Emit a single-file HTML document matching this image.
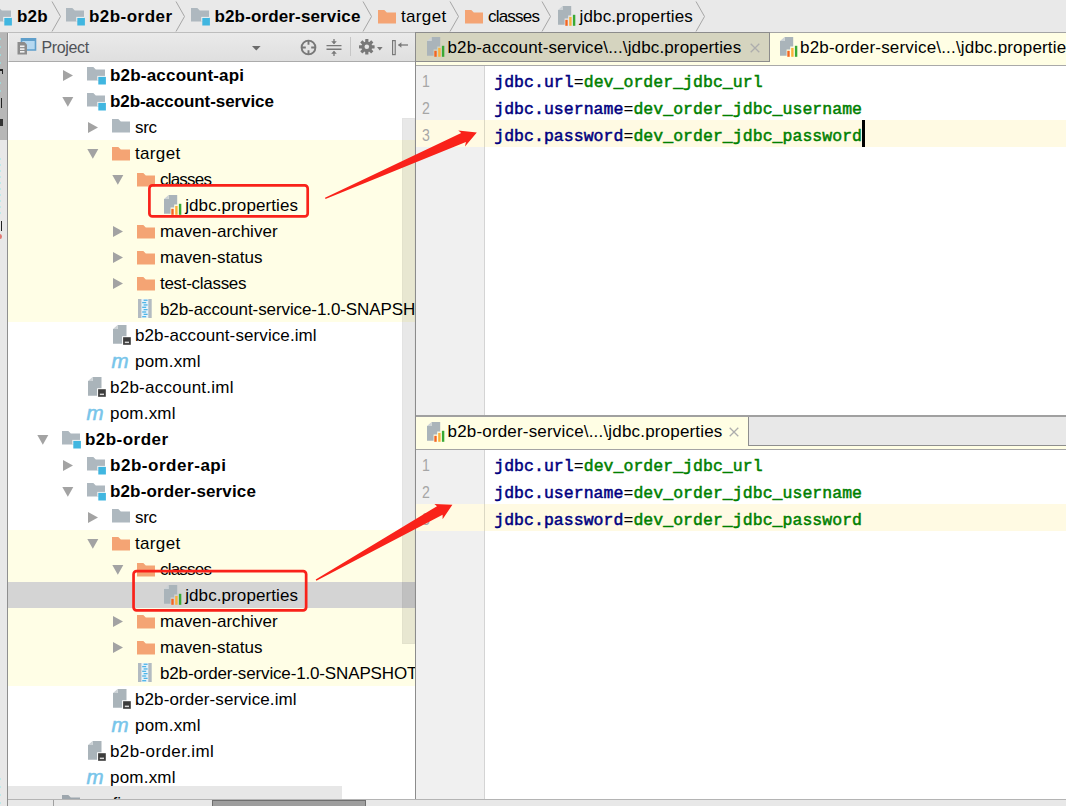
<!DOCTYPE html>
<html><head><meta charset="utf-8"><title>b2b - jdbc.properties</title>
<style>
*{box-sizing:border-box;margin:0;padding:0}
html,body{width:1066px;height:806px;overflow:hidden;background:#fff}
body{position:relative;font:17px "Liberation Sans", sans-serif;color:#000}
.abs{position:absolute}
#crumb{position:absolute;left:0;top:0;width:1066px;height:33px;background:#e9e9e9;border-bottom:1px solid #bdbdbd;overflow:hidden}
.ic{position:absolute;line-height:0}
.tx{position:absolute;white-space:nowrap;line-height:26px;top:0;font-size:17px}
.b{font-weight:bold}
#strip{position:absolute;left:0;top:33px;width:8px;height:773px;background:#e8e8e8;border-right:1px solid #8f8f8f;overflow:hidden}
#tree{position:absolute;left:8px;top:62px;width:407px;height:737px;overflow:hidden;background:#fff}
#treein{position:absolute;left:-8px;top:-62px;width:440px;height:880px}
.row{position:absolute;left:0;width:520px;height:26px}
.ar{position:absolute;line-height:0}
.yb{position:absolute;left:8px;width:407px;background:#fffee6}
#phead{position:absolute;left:8px;top:33px;width:407px;height:29px;background:linear-gradient(#eaeaea,#dfdfdf);border-bottom:1px solid #ababab;border-left:1px solid #f6f6f6}
.cl{position:absolute;left:494.2px;white-space:pre;font:16.5px/27px "Liberation Mono", monospace;letter-spacing:0.04px;height:27px;-webkit-text-stroke:0.5px currentColor}
.k{color:#000080}.v{color:#008000}.eq{color:#000;-webkit-text-stroke:0}
.ln{position:absolute;left:422px;font:16px/27px "Liberation Sans", sans-serif;color:#a6a6a6;transform:scaleX(0.88);transform-origin:0 0}
.mi{display:block;font:italic 20.5px/26px "Liberation Sans", sans-serif;color:#78c5ea;-webkit-text-stroke:0.55px #78c5ea}
.tab{position:absolute;white-space:nowrap;overflow:hidden}
</style></head><body>
<div id="crumb"><span class="ic" style="left:-7px;top:8.4px"><svg width="20" height="19" viewBox="0 0 20 19" style=""><path d="M0 0h6.3l2.5 2.5h9.2v11h-18z" fill="#aeb8bf"/><rect x="10.3" y="8.9" width="7.7" height="4.6" fill="#f4f4f4"/><rect x="11.3" y="9.9" width="7.6" height="7.6" fill="#40b6e0"/></svg></span><span class="tx b" style="left:17px;top:3.5px;letter-spacing:0.167px;">b2b</span><span class="ic" style="left:66px;top:8.4px"><svg width="20" height="19" viewBox="0 0 20 19" style=""><path d="M0 0h6.3l2.5 2.5h9.2v11h-18z" fill="#aeb8bf"/><rect x="10.3" y="8.9" width="7.7" height="4.6" fill="#f4f4f4"/><rect x="11.3" y="9.9" width="7.6" height="7.6" fill="#40b6e0"/></svg></span><span class="tx b" style="left:89px;top:3.5px;letter-spacing:0.467px;">b2b-order</span><span class="ic" style="left:191px;top:8.4px"><svg width="20" height="19" viewBox="0 0 20 19" style=""><path d="M0 0h6.3l2.5 2.5h9.2v11h-18z" fill="#aeb8bf"/><rect x="10.3" y="8.9" width="7.7" height="4.6" fill="#f4f4f4"/><rect x="11.3" y="9.9" width="7.6" height="7.6" fill="#40b6e0"/></svg></span><span class="tx b" style="left:214.5px;top:3.5px;letter-spacing:0.141px;">b2b-order-service</span><span class="ic" style="left:377.7px;top:10.3px"><svg width="20" height="16" viewBox="0 0 20 16" style=""><path d="M0 0h6.3l2.5 2.5h9.2v11h-18z" fill="#f4a474"/></svg></span><span class="tx" style="left:401px;top:3.5px;letter-spacing:0.333px;">target</span><span class="ic" style="left:464.8px;top:10.3px"><svg width="20" height="16" viewBox="0 0 20 16" style=""><path d="M0 0h6.3l2.5 2.5h9.2v11h-18z" fill="#f4a474"/></svg></span><span class="tx" style="left:488px;top:3.5px;letter-spacing:-0.786px;">classes</span><span class="ic" style="left:558.4px;top:6px"><svg width="20" height="21" viewBox="0 0 20 21" style=""><path d="M4.6 0h8.6v9.5h-3v3h-3.6v6.2h-6.6v-14.6h4.6z" fill="#aab4ba"/><path d="M0 4.1l4.6-4.1v4.1z" fill="#ccd2d6"/><rect x="7.3" y="13.8" width="2.4" height="6" fill="#f26522"/><rect x="11.2" y="10.9" width="2.4" height="8.9" fill="#fbb03b"/><rect x="14.9" y="8.8" width="2.4" height="11" fill="#39a935"/></svg></span><span class="tx" style="left:579.6px;top:3.5px;letter-spacing:0.12px;">jdbc.properties</span><span class="ic" style="left:50.6px;top:1px"><svg width="11" height="31" viewBox="0 0 11 31" style=""><path d="M1 0.5L9.5 15.5L1 30.5" fill="none" stroke="#a6a6a6" stroke-width="1"/></svg></span><span class="ic" style="left:175.4px;top:1px"><svg width="11" height="31" viewBox="0 0 11 31" style=""><path d="M1 0.5L9.5 15.5L1 30.5" fill="none" stroke="#a6a6a6" stroke-width="1"/></svg></span><span class="ic" style="left:362px;top:1px"><svg width="11" height="31" viewBox="0 0 11 31" style=""><path d="M1 0.5L9.5 15.5L1 30.5" fill="none" stroke="#a6a6a6" stroke-width="1"/></svg></span><span class="ic" style="left:448.5px;top:1px"><svg width="11" height="31" viewBox="0 0 11 31" style=""><path d="M1 0.5L9.5 15.5L1 30.5" fill="none" stroke="#a6a6a6" stroke-width="1"/></svg></span><span class="ic" style="left:540.5px;top:1px"><svg width="11" height="31" viewBox="0 0 11 31" style=""><path d="M1 0.5L9.5 15.5L1 30.5" fill="none" stroke="#a6a6a6" stroke-width="1"/></svg></span><span class="ic" style="left:695.3px;top:1px"><svg width="11" height="31" viewBox="0 0 11 31" style=""><path d="M1 0.5L9.5 15.5L1 30.5" fill="none" stroke="#a6a6a6" stroke-width="1"/></svg></span></div>
<div id="strip"><div class="abs" style="left:0;top:0;width:7px;height:107px;background:#b7b7b7"></div></div>
<div class="abs" style="left:0px;top:69px;width:3px;height:1.5px;background:#222"></div><div class="abs" style="left:2px;top:70px;width:1px;height:4px;background:#222"></div><div class="abs" style="left:1.2px;top:98px;width:1.2px;height:10px;background:#222"></div><div class="abs" style="left:0px;top:119px;width:2.5px;height:7px;background:#333"></div><div class="abs" style="left:0px;top:38px;width:1px;height:2px;background:#9fd6d6"></div><div class="abs" style="left:0px;top:46px;width:1px;height:2px;background:#9fd6d6"></div><div class="abs" style="left:0px;top:54px;width:1px;height:2px;background:#9fd6d6"></div><div class="abs" style="left:0px;top:62px;width:1px;height:2px;background:#9fd6d6"></div><div class="abs" style="left:0px;top:82px;width:1px;height:2px;background:#9fd6d6"></div><div class="abs" style="left:0px;top:90px;width:1px;height:2px;background:#9fd6d6"></div><div class="abs" style="left:0px;top:158px;width:1px;height:2px;background:#bdeaea"></div><div class="abs" style="left:0px;top:164px;width:1px;height:2px;background:#bdeaea"></div><div class="abs" style="left:0px;top:170px;width:1px;height:2px;background:#bdeaea"></div><div class="abs" style="left:0px;top:176px;width:1px;height:2px;background:#bdeaea"></div><div class="abs" style="left:0px;top:182px;width:1px;height:2px;background:#bdeaea"></div><div class="abs" style="left:0px;top:188px;width:1px;height:2px;background:#bdeaea"></div><div class="abs" style="left:0px;top:194px;width:1px;height:2px;background:#bdeaea"></div><div class="abs" style="left:0px;top:200px;width:1px;height:2px;background:#bdeaea"></div><div class="abs" style="left:0px;top:206px;width:1px;height:2px;background:#bdeaea"></div><div class="abs" style="left:0px;top:212px;width:1px;height:2px;background:#bdeaea"></div><div class="abs" style="left:1.2px;top:221px;width:1.2px;height:10px;background:#222"></div><div class="abs" style="left:-2px;top:234px;width:4px;height:5px;border-radius:50%;background:#e27a74"></div><div class="abs" style="left:0px;top:778px;width:1px;height:2px;background:#bdeaea"></div><div class="abs" style="left:0px;top:786px;width:1px;height:2px;background:#bdeaea"></div><div class="abs" style="left:0px;top:794px;width:1px;height:2px;background:#bdeaea"></div><div class="abs" style="left:0px;top:802px;width:1px;height:2px;background:#bdeaea"></div>
<div id="phead"></div>
<span class="ic" style="left:17px;top:38px"><svg width="20" height="18" viewBox="0 0 20 18" style=""><rect x="4.5" y="0.5" width="14" height="11.5" fill="#b5d8f0"/><path d="M4.5 0.5h14v11.5h-14z" fill="none" stroke="#5f9fcb" stroke-width="1.6"/><rect x="4" y="0" width="15" height="3" fill="#5f9fcb"/><path d="M0.5 4h7l2.5 2.5v10h-9.5z" fill="#8c8c8c"/><rect x="3" y="7.5" width="4.5" height="1.6" fill="#f2f2f2"/><rect x="3" y="10.3" width="4.5" height="1.6" fill="#f2f2f2"/><rect x="3" y="13" width="4.5" height="1.6" fill="#f2f2f2"/></svg></span><span class="tx" style="left:41.5px;top:34.5px;color:#4f5257;font-size:16px;letter-spacing:-0.35px">Project</span><span class="ic" style="left:252px;top:46px"><svg width="9" height="5" viewBox="0 0 9 5" style=""><path d="M0 0H8.6L4.3 4.6z" fill="#6b6b6b"/></svg></span><span class="ic" style="left:300px;top:38.5px"><svg width="17" height="17" viewBox="0 0 17 17" style=""><circle cx="8.5" cy="8.5" r="6.9" fill="none" stroke="#787878" stroke-width="1.9"/><path d="M8.5 1.5v4.3M8.5 15.5v-4.3M1.5 8.5h4.3M15.5 8.5h-4.3" stroke="#787878" stroke-width="1.9" fill="none"/></svg></span><span class="ic" style="left:326px;top:38.5px"><svg width="16" height="17" viewBox="0 0 16 17" style=""><path d="M0.5 6.6h15M0.5 10.2h15" stroke="#787878" stroke-width="1.4" fill="none"/><path d="M8 0v4.5M8 17v-4.5" stroke="#787878" stroke-width="1.3" fill="none"/><path d="M5.2 2.3h5.6L8 5.3zM5.2 14.7h5.6L8 11.7z" fill="#787878"/></svg></span><div class="abs" style="left:350px;top:37px;width:1px;height:19px;background:#c6c6c6"></div><span class="ic" style="left:359px;top:39px"><svg width="16" height="16" viewBox="0 0 16 16" style=""><rect x="6.2" y="0" width="3.2" height="15.6" rx="0.4" fill="#787878" transform="rotate(0 7.8 7.8)"/><rect x="6.2" y="0" width="3.2" height="15.6" rx="0.4" fill="#787878" transform="rotate(45 7.8 7.8)"/><rect x="6.2" y="0" width="3.2" height="15.6" rx="0.4" fill="#787878" transform="rotate(90 7.8 7.8)"/><rect x="6.2" y="0" width="3.2" height="15.6" rx="0.4" fill="#787878" transform="rotate(135 7.8 7.8)"/><circle cx="7.8" cy="7.8" r="5.4" fill="#787878"/><circle cx="7.8" cy="7.8" r="2.3" fill="#e6e6e6"/></svg></span><span class="ic" style="left:377px;top:45.5px"><svg width="6" height="4" viewBox="0 0 6 4" style=""><path d="M0 0H5.6L2.8 3.4z" fill="#787878"/></svg></span><span class="ic" style="left:392px;top:39.5px"><svg width="17" height="16" viewBox="0 0 17 16" style=""><rect x="0.6" y="0.6" width="2.6" height="14" fill="#e9e9e9" stroke="#787878" stroke-width="1.2"/><path d="M6.5 5h9.5" stroke="#787878" stroke-width="1.3"/><path d="M6 5l3.4-2.8v5.6z" fill="#787878"/></svg></span>
<div id="tree"><div id="treein">
<div class="yb" style="top:140px;height:182px"></div>
<div class="yb" style="top:530px;height:156px"></div>
<div class="abs" style="left:8px;top:582px;width:407px;height:26px;background:#d4d4d4"></div>
<div class="row" style="top:62px"><span class="ar" style="left:63px;top:8px"><svg width="10" height="11" viewBox="0 0 10 11" style=""><path d="M0 0L10 5.5L0 11z" fill="#a3a3a3"/></svg></span><span class="ic" style="left:87px;top:5.4px"><svg width="20" height="19" viewBox="0 0 20 19" style=""><path d="M0 0h6.3l2.5 2.5h9.2v11h-18z" fill="#aeb8bf"/><rect x="10.3" y="8.9" width="7.7" height="4.6" fill="#f4f4f4"/><rect x="11.3" y="9.9" width="7.6" height="7.6" fill="#40b6e0"/></svg></span><span class="tx b" style="left:110px;top:1px;letter-spacing:0.2px;">b2b-account-api</span></div>
<div class="row" style="top:88px"><span class="ar" style="left:62px;top:9px"><svg width="12" height="10" viewBox="0 0 12 10" style=""><path d="M0.3 0H11.3L5.8 9.8z" fill="#a3a3a3"/></svg></span><span class="ic" style="left:87px;top:5.4px"><svg width="20" height="19" viewBox="0 0 20 19" style=""><path d="M0 0h6.3l2.5 2.5h9.2v11h-18z" fill="#aeb8bf"/><rect x="10.3" y="8.9" width="7.7" height="4.6" fill="#f4f4f4"/><rect x="11.3" y="9.9" width="7.6" height="7.6" fill="#40b6e0"/></svg></span><span class="tx b" style="left:110px;top:1px;letter-spacing:-0.079px;">b2b-account-service</span></div>
<div class="row" style="top:114px"><span class="ar" style="left:88px;top:8px"><svg width="10" height="11" viewBox="0 0 10 11" style=""><path d="M0 0L10 5.5L0 11z" fill="#a3a3a3"/></svg></span><span class="ic" style="left:112px;top:5.4px"><svg width="20" height="16" viewBox="0 0 20 16" style=""><path d="M0 0h6.3l2.5 2.5h9.2v11h-18z" fill="#aeb8bf"/></svg></span><span class="tx" style="left:135px;top:1px;letter-spacing:-0.333px;">src</span></div>
<div class="row" style="top:140px"><span class="ar" style="left:87px;top:9px"><svg width="12" height="10" viewBox="0 0 12 10" style=""><path d="M0.3 0H11.3L5.8 9.8z" fill="#a3a3a3"/></svg></span><span class="ic" style="left:112px;top:7.3px"><svg width="20" height="16" viewBox="0 0 20 16" style=""><path d="M0 0h6.3l2.5 2.5h9.2v11h-18z" fill="#f4a474"/></svg></span><span class="tx" style="left:135px;top:1px;letter-spacing:0.333px;">target</span></div>
<div class="row" style="top:166px"><span class="ar" style="left:112px;top:9px"><svg width="12" height="10" viewBox="0 0 12 10" style=""><path d="M0.3 0H11.3L5.8 9.8z" fill="#a3a3a3"/></svg></span><span class="ic" style="left:137px;top:7.3px"><svg width="20" height="16" viewBox="0 0 20 16" style=""><path d="M0 0h6.3l2.5 2.5h9.2v11h-18z" fill="#f4a474"/></svg></span><span class="tx" style="left:160px;top:1px;letter-spacing:-0.786px;">classes</span></div>
<div class="row" style="top:192px"><span class="ic" style="left:163.7px;top:3px"><svg width="20" height="21" viewBox="0 0 20 21" style=""><path d="M4.6 0h8.6v9.5h-3v3h-3.6v6.2h-6.6v-14.6h4.6z" fill="#aab4ba"/><path d="M0 4.1l4.6-4.1v4.1z" fill="#ccd2d6"/><rect x="7.3" y="13.8" width="2.4" height="6" fill="#f26522"/><rect x="11.2" y="10.9" width="2.4" height="8.9" fill="#fbb03b"/><rect x="14.9" y="8.8" width="2.4" height="11" fill="#39a935"/></svg></span><span class="tx" style="left:185.2px;top:1px;letter-spacing:0.09px;">jdbc.properties</span></div>
<div class="row" style="top:218px"><span class="ar" style="left:113px;top:8px"><svg width="10" height="11" viewBox="0 0 10 11" style=""><path d="M0 0L10 5.5L0 11z" fill="#a3a3a3"/></svg></span><span class="ic" style="left:137px;top:7.3px"><svg width="20" height="16" viewBox="0 0 20 16" style=""><path d="M0 0h6.3l2.5 2.5h9.2v11h-18z" fill="#f4a474"/></svg></span><span class="tx" style="left:160px;top:1px;letter-spacing:0.036px;">maven-archiver</span></div>
<div class="row" style="top:244px"><span class="ar" style="left:113px;top:8px"><svg width="10" height="11" viewBox="0 0 10 11" style=""><path d="M0 0L10 5.5L0 11z" fill="#a3a3a3"/></svg></span><span class="ic" style="left:137px;top:7.3px"><svg width="20" height="16" viewBox="0 0 20 16" style=""><path d="M0 0h6.3l2.5 2.5h9.2v11h-18z" fill="#f4a474"/></svg></span><span class="tx" style="left:160px;top:1px;letter-spacing:0.042px;">maven-status</span></div>
<div class="row" style="top:270px"><span class="ar" style="left:113px;top:8px"><svg width="10" height="11" viewBox="0 0 10 11" style=""><path d="M0 0L10 5.5L0 11z" fill="#a3a3a3"/></svg></span><span class="ic" style="left:137px;top:7.3px"><svg width="20" height="16" viewBox="0 0 20 16" style=""><path d="M0 0h6.3l2.5 2.5h9.2v11h-18z" fill="#f4a474"/></svg></span><span class="tx" style="left:160px;top:1px;letter-spacing:-0.292px;">test-classes</span></div>
<div class="row" style="top:296px"><span class="ic" style="left:138.3px;top:3px"><svg width="18" height="20" viewBox="0 0 18 20" style=""><rect x="0" y="0" width="13.7" height="19" fill="#b3bbc1"/><rect x="3.4" y="0" width="6.9" height="19" fill="#e9f4fa"/><rect x="5.6" y="0.60" width="4" height="1.3" fill="#4db4e6"/><rect x="4.2" y="2.95" width="4" height="1.3" fill="#4db4e6"/><rect x="5.6" y="5.30" width="4" height="1.3" fill="#4db4e6"/><rect x="4.2" y="7.65" width="4" height="1.3" fill="#4db4e6"/><rect x="5.6" y="10.00" width="4" height="1.3" fill="#4db4e6"/><rect x="4.2" y="12.35" width="4" height="1.3" fill="#4db4e6"/><rect x="5.6" y="14.70" width="4" height="1.3" fill="#4db4e6"/><rect x="4.2" y="17.05" width="4" height="1.3" fill="#4db4e6"/></svg></span><span class="tx" style="left:160px;top:1px;letter-spacing:-0.09px;">b2b-account-service-1.0-SNAPSHOT.jar</span></div>
<div class="row" style="top:322px"><span class="ic" style="left:113.4px;top:3.2px"><svg width="20" height="21" viewBox="0 0 20 21" style=""><path d="M4.6 0h8.9v11.2h-4.4v7.6h-9.1v-14.7h4.6z" fill="#aab4ba"/><path d="M0 4.1l4.6-4.1v4.1z" fill="#ccd2d6"/><rect x="10.1" y="12.2" width="7.7" height="7.6" fill="#3c3c3c"/><rect x="11.8" y="16.6" width="4.2" height="1.5" fill="#d8d8d8"/></svg></span><span class="tx" style="left:135px;top:1px;letter-spacing:0.096px;">b2b-account-service.iml</span></div>
<div class="row" style="top:348px"><span class="ic" style="left:111.5px;top:-0.3px"><span class="mi">m</span></span><span class="tx" style="left:135px;top:1px;letter-spacing:0.214px;">pom.xml</span></div>
<div class="row" style="top:374px"><span class="ic" style="left:88.4px;top:3.2px"><svg width="20" height="21" viewBox="0 0 20 21" style=""><path d="M4.6 0h8.9v11.2h-4.4v7.6h-9.1v-14.7h4.6z" fill="#aab4ba"/><path d="M0 4.1l4.6-4.1v4.1z" fill="#ccd2d6"/><rect x="10.1" y="12.2" width="7.7" height="7.6" fill="#3c3c3c"/><rect x="11.8" y="16.6" width="4.2" height="1.5" fill="#d8d8d8"/></svg></span><span class="tx" style="left:110px;top:1px;letter-spacing:0.253px;">b2b-account.iml</span></div>
<div class="row" style="top:400px"><span class="ic" style="left:86.5px;top:-0.3px"><span class="mi">m</span></span><span class="tx" style="left:110px;top:1px;letter-spacing:0.214px;">pom.xml</span></div>
<div class="row" style="top:426px"><span class="ar" style="left:37px;top:9px"><svg width="12" height="10" viewBox="0 0 12 10" style=""><path d="M0.3 0H11.3L5.8 9.8z" fill="#a3a3a3"/></svg></span><span class="ic" style="left:62px;top:5.4px"><svg width="20" height="19" viewBox="0 0 20 19" style=""><path d="M0 0h6.3l2.5 2.5h9.2v11h-18z" fill="#aeb8bf"/><rect x="10.3" y="8.9" width="7.7" height="4.6" fill="#f4f4f4"/><rect x="11.3" y="9.9" width="7.6" height="7.6" fill="#40b6e0"/></svg></span><span class="tx b" style="left:85px;top:1px;letter-spacing:0.467px;">b2b-order</span></div>
<div class="row" style="top:452px"><span class="ar" style="left:63px;top:8px"><svg width="10" height="11" viewBox="0 0 10 11" style=""><path d="M0 0L10 5.5L0 11z" fill="#a3a3a3"/></svg></span><span class="ic" style="left:87px;top:5.4px"><svg width="20" height="19" viewBox="0 0 20 19" style=""><path d="M0 0h6.3l2.5 2.5h9.2v11h-18z" fill="#aeb8bf"/><rect x="10.3" y="8.9" width="7.7" height="4.6" fill="#f4f4f4"/><rect x="11.3" y="9.9" width="7.6" height="7.6" fill="#40b6e0"/></svg></span><span class="tx b" style="left:110px;top:1px;letter-spacing:0.538px;">b2b-order-api</span></div>
<div class="row" style="top:478px"><span class="ar" style="left:62px;top:9px"><svg width="12" height="10" viewBox="0 0 12 10" style=""><path d="M0.3 0H11.3L5.8 9.8z" fill="#a3a3a3"/></svg></span><span class="ic" style="left:87px;top:5.4px"><svg width="20" height="19" viewBox="0 0 20 19" style=""><path d="M0 0h6.3l2.5 2.5h9.2v11h-18z" fill="#aeb8bf"/><rect x="10.3" y="8.9" width="7.7" height="4.6" fill="#f4f4f4"/><rect x="11.3" y="9.9" width="7.6" height="7.6" fill="#40b6e0"/></svg></span><span class="tx b" style="left:110px;top:1px;letter-spacing:0.141px;">b2b-order-service</span></div>
<div class="row" style="top:504px"><span class="ar" style="left:88px;top:8px"><svg width="10" height="11" viewBox="0 0 10 11" style=""><path d="M0 0L10 5.5L0 11z" fill="#a3a3a3"/></svg></span><span class="ic" style="left:112px;top:5.4px"><svg width="20" height="16" viewBox="0 0 20 16" style=""><path d="M0 0h6.3l2.5 2.5h9.2v11h-18z" fill="#aeb8bf"/></svg></span><span class="tx" style="left:135px;top:1px;letter-spacing:-0.333px;">src</span></div>
<div class="row" style="top:530px"><span class="ar" style="left:87px;top:9px"><svg width="12" height="10" viewBox="0 0 12 10" style=""><path d="M0.3 0H11.3L5.8 9.8z" fill="#a3a3a3"/></svg></span><span class="ic" style="left:112px;top:7.3px"><svg width="20" height="16" viewBox="0 0 20 16" style=""><path d="M0 0h6.3l2.5 2.5h9.2v11h-18z" fill="#f4a474"/></svg></span><span class="tx" style="left:135px;top:1px;letter-spacing:0.333px;">target</span></div>
<div class="row" style="top:556px"><span class="ar" style="left:112px;top:9px"><svg width="12" height="10" viewBox="0 0 12 10" style=""><path d="M0.3 0H11.3L5.8 9.8z" fill="#a3a3a3"/></svg></span><span class="ic" style="left:137px;top:7.3px"><svg width="20" height="16" viewBox="0 0 20 16" style=""><path d="M0 0h6.3l2.5 2.5h9.2v11h-18z" fill="#f4a474"/></svg></span><span class="tx" style="left:160px;top:1px;letter-spacing:-0.786px;">classes</span></div>
<div class="row" style="top:582px"><span class="ic" style="left:163.7px;top:3px"><svg width="20" height="21" viewBox="0 0 20 21" style=""><path d="M4.6 0h8.6v9.5h-3v3h-3.6v6.2h-6.6v-14.6h4.6z" fill="#aab4ba"/><path d="M0 4.1l4.6-4.1v4.1z" fill="#ccd2d6"/><rect x="7.3" y="13.8" width="2.4" height="6" fill="#f26522"/><rect x="11.2" y="10.9" width="2.4" height="8.9" fill="#fbb03b"/><rect x="14.9" y="8.8" width="2.4" height="11" fill="#39a935"/></svg></span><span class="tx" style="left:185.2px;top:1px;letter-spacing:0.09px;">jdbc.properties</span></div>
<div class="row" style="top:608px"><span class="ar" style="left:113px;top:8px"><svg width="10" height="11" viewBox="0 0 10 11" style=""><path d="M0 0L10 5.5L0 11z" fill="#a3a3a3"/></svg></span><span class="ic" style="left:137px;top:7.3px"><svg width="20" height="16" viewBox="0 0 20 16" style=""><path d="M0 0h6.3l2.5 2.5h9.2v11h-18z" fill="#f4a474"/></svg></span><span class="tx" style="left:160px;top:1px;letter-spacing:0.036px;">maven-archiver</span></div>
<div class="row" style="top:634px"><span class="ar" style="left:113px;top:8px"><svg width="10" height="11" viewBox="0 0 10 11" style=""><path d="M0 0L10 5.5L0 11z" fill="#a3a3a3"/></svg></span><span class="ic" style="left:137px;top:7.3px"><svg width="20" height="16" viewBox="0 0 20 16" style=""><path d="M0 0h6.3l2.5 2.5h9.2v11h-18z" fill="#f4a474"/></svg></span><span class="tx" style="left:160px;top:1px;letter-spacing:0.042px;">maven-status</span></div>
<div class="row" style="top:660px"><span class="ic" style="left:138.3px;top:3px"><svg width="18" height="20" viewBox="0 0 18 20" style=""><rect x="0" y="0" width="13.7" height="19" fill="#b3bbc1"/><rect x="3.4" y="0" width="6.9" height="19" fill="#e9f4fa"/><rect x="5.6" y="0.60" width="4" height="1.3" fill="#4db4e6"/><rect x="4.2" y="2.95" width="4" height="1.3" fill="#4db4e6"/><rect x="5.6" y="5.30" width="4" height="1.3" fill="#4db4e6"/><rect x="4.2" y="7.65" width="4" height="1.3" fill="#4db4e6"/><rect x="5.6" y="10.00" width="4" height="1.3" fill="#4db4e6"/><rect x="4.2" y="12.35" width="4" height="1.3" fill="#4db4e6"/><rect x="5.6" y="14.70" width="4" height="1.3" fill="#4db4e6"/><rect x="4.2" y="17.05" width="4" height="1.3" fill="#4db4e6"/></svg></span><span class="tx" style="left:160px;top:1px;letter-spacing:-0.15px;">b2b-order-service-1.0-SNAPSHOT.jar</span></div>
<div class="row" style="top:686px"><span class="ic" style="left:113.4px;top:3.2px"><svg width="20" height="21" viewBox="0 0 20 21" style=""><path d="M4.6 0h8.9v11.2h-4.4v7.6h-9.1v-14.7h4.6z" fill="#aab4ba"/><path d="M0 4.1l4.6-4.1v4.1z" fill="#ccd2d6"/><rect x="10.1" y="12.2" width="7.7" height="7.6" fill="#3c3c3c"/><rect x="11.8" y="16.6" width="4.2" height="1.5" fill="#d8d8d8"/></svg></span><span class="tx" style="left:135px;top:1px;letter-spacing:0.095px;">b2b-order-service.iml</span></div>
<div class="row" style="top:712px"><span class="ic" style="left:111.5px;top:-0.3px"><span class="mi">m</span></span><span class="tx" style="left:135px;top:1px;letter-spacing:0.214px;">pom.xml</span></div>
<div class="row" style="top:738px"><span class="ic" style="left:88.4px;top:3.2px"><svg width="20" height="21" viewBox="0 0 20 21" style=""><path d="M4.6 0h8.9v11.2h-4.4v7.6h-9.1v-14.7h4.6z" fill="#aab4ba"/><path d="M0 4.1l4.6-4.1v4.1z" fill="#ccd2d6"/><rect x="10.1" y="12.2" width="7.7" height="7.6" fill="#3c3c3c"/><rect x="11.8" y="16.6" width="4.2" height="1.5" fill="#d8d8d8"/></svg></span><span class="tx" style="left:110px;top:1px;letter-spacing:0.385px;">b2b-order.iml</span></div>
<div class="row" style="top:764px"><span class="ic" style="left:86.5px;top:-0.3px"><span class="mi">m</span></span><span class="tx" style="left:110px;top:1px;letter-spacing:0.214px;">pom.xml</span></div>
<div class="row" style="top:790px"><span class="ic" style="left:62px;top:5.4px"><svg width="20" height="16" viewBox="0 0 20 16" style=""><path d="M0 0h6.3l2.5 2.5h9.2v11h-18z" fill="#aeb8bf"/></svg></span><span class="tx" style="left:85px;top:1px;">config</span></div>
<div class="abs" style="left:402px;top:118px;width:13px;height:526px;background:rgba(0,0,0,0.09);border:1px solid rgba(0,0,0,0.02)"></div>
<div class="abs" style="left:8px;top:786px;width:334px;height:13px;background:rgba(0,0,0,0.095)"></div>
</div></div>
<!-- editor top -->
<div class="abs" style="left:415px;top:32px;width:1px;height:767px;background:#8c8c8c"></div>
<div class="abs" style="left:416px;top:32px;width:650px;height:30px;background:#e8e8e8;border-top:1px solid #a4a4a4"></div>
<div class="tab" style="left:416px;top:32px;width:354px;height:30px;background:#d5d4bf;border:1px solid #8c8c8c;border-left:none"></div>
<div class="tab" style="left:770px;top:32px;width:296px;height:33px;background:#fffee4;border-top:1px solid #a4a4a4"></div>
<div class="abs" style="left:416px;top:62px;width:650px;height:4px;background:#fffee4;border-bottom:1px solid #a9a9a9"></div>
<span class="ic" style="left:426.7px;top:37.1px"><svg width="20" height="21" viewBox="0 0 20 21" style=""><path d="M4.6 0h8.6v9.5h-3v3h-3.6v6.2h-6.6v-14.6h4.6z" fill="#aab4ba"/><path d="M0 4.1l4.6-4.1v4.1z" fill="#ccd2d6"/><rect x="7.3" y="13.8" width="2.4" height="6" fill="#f26522"/><rect x="11.2" y="10.9" width="2.4" height="8.9" fill="#fbb03b"/><rect x="14.9" y="8.8" width="2.4" height="11" fill="#39a935"/></svg></span>
<span class="tx" style="left:447.5px;top:34.5px;letter-spacing:0.144px;">b2b-account-service\...\jdbc.properties</span>
<span class="ic" style="left:749.5px;top:42.5px"><svg width="10" height="10" viewBox="0 0 10 10" style=""><path d="M0.7 0.7L9.3 9.3M9.3 0.7L0.7 9.3" stroke="#adadad" stroke-width="1.3" fill="none"/></svg></span>
<span class="ic" style="left:779.8px;top:37.1px"><svg width="20" height="21" viewBox="0 0 20 21" style=""><path d="M4.6 0h8.6v9.5h-3v3h-3.6v6.2h-6.6v-14.6h4.6z" fill="#aab4ba"/><path d="M0 4.1l4.6-4.1v4.1z" fill="#ccd2d6"/><rect x="7.3" y="13.8" width="2.4" height="6" fill="#f26522"/><rect x="11.2" y="10.9" width="2.4" height="8.9" fill="#fbb03b"/><rect x="14.9" y="8.8" width="2.4" height="11" fill="#39a935"/></svg></span>
<span class="tx" style="left:800px;top:34.5px;letter-spacing:0.181px;">b2b-order-service\...\jdbc.properties</span>
<div class="abs" style="left:416px;top:66px;width:69px;height:349px;background:#f0f0f0;border-right:1px solid #d4d4d4"></div>
<div class="abs" style="left:416px;top:120px;width:650px;height:27px;background:#fffae3"></div>
<div class="abs" style="left:484px;top:120px;width:1px;height:27px;background:#dcd8c4"></div>
<div class="ln" style="top:68px">1</div><div class="ln" style="top:95px">2</div><div class="ln" style="top:122px">3</div>
<div class="cl" style="top:69px"><span class="k">jdbc.url</span><span class="eq">=</span><span class="v">dev_order_jdbc_url</span></div><div class="cl" style="top:96px"><span class="k">jdbc.username</span><span class="eq">=</span><span class="v">dev_order_jdbc_username</span></div><div class="cl" style="top:123px"><span class="k">jdbc.password</span><span class="eq">=</span><span class="v">dev_order_jdbc_password</span></div>
<div class="abs" style="left:862.4px;top:120px;width:2.3px;height:27px;background:#000"></div>
<!-- split -->
<div class="abs" style="left:416px;top:415px;width:650px;height:2px;background:#a0a0a0"></div>
<div class="abs" style="left:416px;top:417px;width:650px;height:29px;background:#e8e8e8;border-bottom:1px solid #8e8e8e"></div>
<div class="tab" style="left:416px;top:417px;width:333px;height:31px;background:#fffee4;border-right:1px solid #8e8e8e"></div>
<div class="abs" style="left:416px;top:446px;width:650px;height:4px;background:#fffee4;border-bottom:1px solid #a4a4a4"></div>
<span class="ic" style="left:426.7px;top:421.5px"><svg width="20" height="21" viewBox="0 0 20 21" style=""><path d="M4.6 0h8.6v9.5h-3v3h-3.6v6.2h-6.6v-14.6h4.6z" fill="#aab4ba"/><path d="M0 4.1l4.6-4.1v4.1z" fill="#ccd2d6"/><rect x="7.3" y="13.8" width="2.4" height="6" fill="#f26522"/><rect x="11.2" y="10.9" width="2.4" height="8.9" fill="#fbb03b"/><rect x="14.9" y="8.8" width="2.4" height="11" fill="#39a935"/></svg></span>
<span class="tx" style="left:447.5px;top:418.5px;letter-spacing:0.181px;">b2b-order-service\...\jdbc.properties</span>
<span class="ic" style="left:729.2px;top:426.6px"><svg width="10" height="10" viewBox="0 0 10 10" style=""><path d="M0.7 0.7L9.3 9.3M9.3 0.7L0.7 9.3" stroke="#adadad" stroke-width="1.3" fill="none"/></svg></span>
<div class="abs" style="left:416px;top:450px;width:69px;height:349px;background:#f0f0f0;border-right:1px solid #d4d4d4"></div>
<div class="abs" style="left:416px;top:504px;width:650px;height:27px;background:#fffae3"></div>
<div class="abs" style="left:484px;top:504px;width:1px;height:27px;background:#dcd8c4"></div>
<div class="ln" style="top:452px">1</div><div class="ln" style="top:479px">2</div><div class="ln" style="top:506px">3</div>
<div class="cl" style="top:453px"><span class="k">jdbc.url</span><span class="eq">=</span><span class="v">dev_order_jdbc_url</span></div><div class="cl" style="top:480px"><span class="k">jdbc.username</span><span class="eq">=</span><span class="v">dev_order_jdbc_username</span></div><div class="cl" style="top:507px"><span class="k">jdbc.password</span><span class="eq">=</span><span class="v">dev_order_jdbc_password</span></div>
<!-- bottom -->
<div class="abs" style="left:8px;top:799px;width:1058px;height:7px;background:#e8e8e8;border-top:1px solid #b4b4b4"></div>
<div class="abs" style="left:53px;top:800px;width:1px;height:6px;background:#a0a0a0"></div>
<div class="abs" style="left:212px;top:800px;width:154px;height:6px;background:#9e9e9e;border:1px solid #707070;border-bottom:none"></div>
<!-- annotations -->
<svg class="abs" style="left:0;top:0;pointer-events:none" width="1066" height="806" viewBox="0 0 1066 806">
<rect x="149.4" y="185.45" width="158.3" height="31" rx="3" fill="none" stroke="#f9221a" stroke-width="2.7"/>
<rect x="133.55" y="571.15" width="172.6" height="39.2" rx="3" fill="none" stroke="#f9221a" stroke-width="2.7"/>
<path d="M325 197.7L461.2 132.9L458.3 130.5L476.8 132.4L465 146.5L465.9 142L325.5 198.9Z" fill="#f9221a"/>
<path d="M315.7 579.5L437 506.2L434.4 504.1L452.4 504.7L442.6 519.3L442.6 514.8L316.4 580.7Z" fill="#f9221a"/>
</svg>
</body></html>
